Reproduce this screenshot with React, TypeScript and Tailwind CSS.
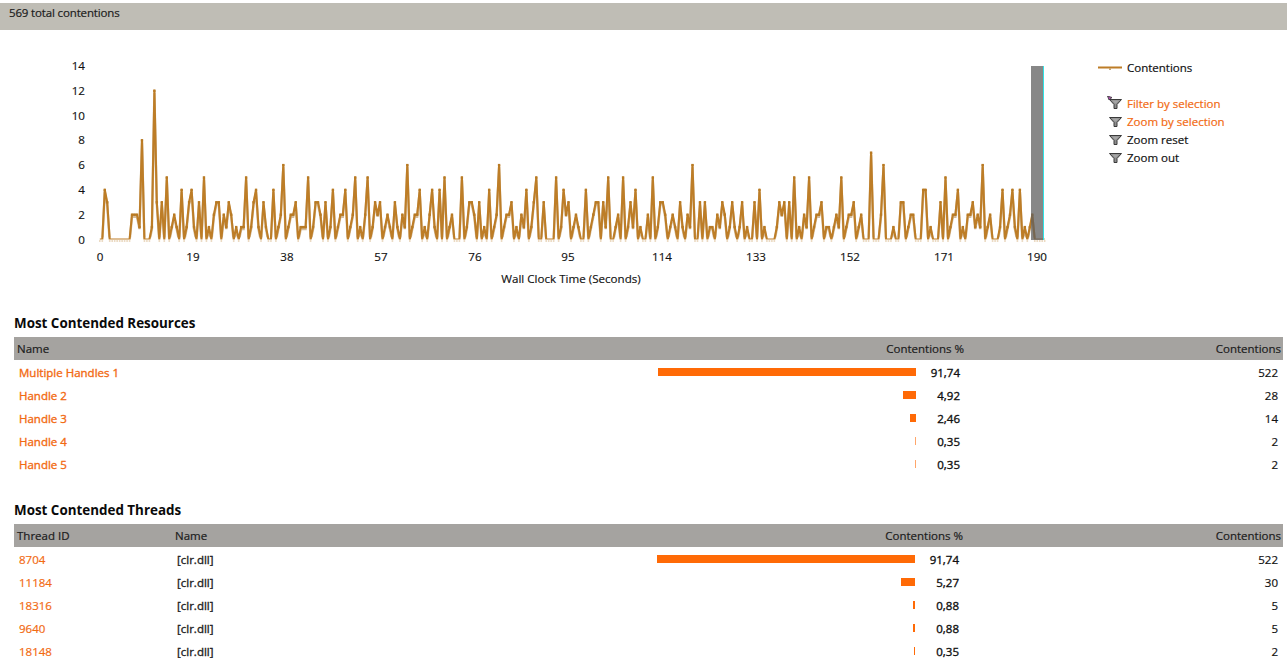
const VALUES = [
  0,0,4,3,0,0,0,0,0,0,0,0,0,2,2,2,1,8,0,0,0,1,12,3,0,3,0,5,0,1,2,1,0,4,0,1,3,4,1,0,3,0,5,0,1,0,2,3,3,0,2,1,3,2,0,1,0,1,1,5,0,1,3,4,1,0,3,1,0,0,4,0,1,2,6,0,1,2,2,3,0,1,1,1,5,0,1,3,3,2,0,3,0,1,4,0,1,2,2,4,0,1,2,5,0,1,0,2,5,0,1,3,2,3,0,1,2,1,0,3,1,0,2,1,6,
  0,1,2,2,4,0,1,0,2,4,1,0,4,0,5,0,1,2,0,0,0,5,0,1,3,3,2,0,3,0,1,0,4,0,1,2,6,0,1,2,2,3,0,1,0,2,1,4,0,1,3,5,0,0,3,0,0,0,0,5,0,1,4,2,3,0,1,2,1,0,0,4,0,1,2,3,3,0,3,1,5,0,0,1,2,0,5,0,1,3,1,4,0,1,0,0,2,0,5,0,1,3,3,2,0,1,2,1,0,3,1,0,2,1,6,0,0,3,0,3,0,1,1,0,2,1,3,2,0,1,3,1,0,1,3,0,1,
  0,0,3,0,4,0,1,0,0,0,0,1,3,2,3,0,3,0,5,0,1,0,2,1,5,0,1,2,2,3,0,1,1,0,1,2,1,5,0,1,2,2,3,0,1,2,0,0,0,7,0,0,0,2,6,0,0,0,1,0,0,3,3,0,1,2,2,0,0,0,4,4,0,1,0,0,0,3,0,5,0,1,2,2,4,0,1,0,2,2,3,1,2,1,6,0,1,2,0,0,0,1,4,0,1,2,4,1,0,4,0,1,0,1,2,0,0,0,0,0,
];
const X0 = 99.8;
const STEP = 2.48;
const Y0 = 209.5;
const UNIT = 12.4;
const pts = (dy: number) => VALUES.map((v, i) => `${(X0 + i * STEP).toFixed(1)},${(Y0 - v * UNIT + dy).toFixed(1)}`).join(" ");
const Y_TICKS = [0, 2, 4, 6, 8, 10, 12, 14];
const X_TICKS = [
  [0, 100], [19, 193], [38, 287], [57, 381], [76, 475], [95, 568], [114, 662], [133, 756], [152, 850], [171, 944], [190, 1037],
];
const FONT = "font-['Open_Sans','Noto_Sans',sans-serif]";
const INK = "[-webkit-text-stroke:0.2px_currentColor]";
const INK_STRONG = "[-webkit-text-stroke:0.35px_currentColor]";

function Funnel({ cursor }: { cursor?: boolean }) {
  return (
    <svg width="16" height="16" viewBox="0 0 16 16" className="shrink-0">
      <path d="M2.5 3.5 H14.5 L10 8.5 V12.5 H7 V8.5 Z" fill="#8d8d8d" stroke="#3a3a3a" strokeWidth="1" />
      <path d="M5 4.5 H12 L9 7.5 H8 Z" fill="#a6a6a6" />
      {cursor && <path d="M0.5 0 L5 1.5 L2 4 Z" fill="#b04fb0" stroke="#333333" strokeWidth="0.8" />}
    </svg>
  );
}

function Chart() {
  return (
    <svg width="1090" height="262" viewBox="0 0 1090 262" className="shrink-0">
      <defs>
        <clipPath id="shadow">
          <rect x="90" y="30" width="960" height={Y0 - 32} />
        </clipPath>
        <clipPath id="plot">
          <rect x="90" y="30" width="960" height={Y0 - 30} />
        </clipPath>
      </defs>
      <g clipPath="url(#shadow)">
        <polyline points={pts(2)} fill="none" stroke="#cdb08a" strokeWidth="2.4" strokeLinejoin="miter" opacity="0.85" />
      </g>
      <g clipPath="url(#plot)">
        <polyline points={pts(0)} fill="none" stroke="#bd7d27" strokeWidth="2.1" strokeLinejoin="round" />
      </g>
      {VALUES.map((v, i) =>
        v === 0 ? (
          <rect key={i} x={X0 + i * STEP - 0.8} y={Y0 + 1} width="1.6" height="1" fill="#b87a24" opacity="0.55" />
        ) : (
          <rect key={i} x={X0 + i * STEP - 1.2} y={Y0 - v * UNIT - 1.2} width="2.4" height="2.4" fill="#b87a24" />
        ),
      )}
      <rect x="1031" y="36" width="12.5" height="174" fill="#5f5f5f" opacity="0.75" />
      <rect x="1043" y="36" width="1" height="174" fill="#2fe3e6" />
      <g fontSize="11.6" fill="#111111" stroke="#111111" strokeWidth="0.15">
        {Y_TICKS.map((t) => (
          <text key={t} x="85" y={Y0 - t * UNIT + 4} textAnchor="end">{t}</text>
        ))}
        {X_TICKS.map(([label, x]) => (
          <text key={label} x={x} y="231" textAnchor="middle">{label}</text>
        ))}
        <text x="571" y="253" textAnchor="middle">Wall Clock Time (Seconds)</text>
      </g>
    </svg>
  );
}

function Legend() {
  const items = [
    { label: "Filter by selection", cls: "text-[#f26a12]", cursor: true },
    { label: "Zoom by selection", cls: "text-[#f26a12]" },
    { label: "Zoom reset", cls: "text-[#111111]" },
    { label: "Zoom out", cls: "text-[#111111]" },
  ];
  return (
    <div className="ml-[8px] flex flex-col pt-[29px]">
      <div className="flex h-[18px] items-center gap-[5px]">
        <svg width="24" height="4" viewBox="0 0 24 4" className="shrink-0">
          <rect x="0" y="0.5" width="24" height="2" fill="#bd7d27" />
          <rect x="11" y="2" width="2" height="2" fill="#c9a878" />
        </svg>
        <span className={`text-[#111111] ${INK}`}>Contentions</span>
      </div>
      <div className="mt-[18px] flex flex-col pl-[9px]">
        {items.map((it) => (
          <div key={it.label} className="flex h-[18px] items-center gap-[4px]">
            <Funnel cursor={it.cursor} />
            <span className={`${it.cls} ${INK}`}>{it.label}</span>
          </div>
        ))}
      </div>
    </div>
  );
}

function Bar({ w }: { w: string }) {
  return (
    <div className="flex h-full w-[258px] items-center justify-end">
      <span className={`h-[8px] bg-[#ff6a06] ${w}`} />
    </div>
  );
}

function Resources() {
  const rows = [
    ["Multiple Handles 1", "w-[258px]", "91,74", "522"],
    ["Handle 2", "w-[13px]", "4,92", "28"],
    ["Handle 3", "w-[6px]", "2,46", "14"],
    ["Handle 4", "w-[1px] opacity-60", "0,35", "2"],
    ["Handle 5", "w-[1px] opacity-60", "0,35", "2"],
  ];
  return (
    <section className="ml-[14px] w-[1269px]">
      <h2 className="flex h-[27px] items-center text-[13.4px] font-bold text-[#0a0a0a]">Most Contended Resources</h2>
      <div className={`flex h-[23px] items-center bg-[#a5a3a0] text-[#1c1c1c] ${INK}`}>
        <span className="flex-1 pl-[3px]">Name</span>
        <span className="w-[200px] pr-[2px] text-right">Contentions %</span>
        <span className="w-[317px] pr-[2px] text-right">Contentions</span>
      </div>
      {rows.map(([name, w, pct, n]) => (
        <div key={name} className="flex h-[23px] items-center">
          <span className={`w-[644px] pl-[5px] pt-[2px] text-[#f26a12] ${INK_STRONG}`}>{name}</span>
          <Bar w={w} />
          <span className={`w-[44px] pt-[2px] text-right text-[#111111] ${INK_STRONG}`}>{pct}</span>
          <span className={`flex-1 pr-[5px] pt-[2px] text-right text-[#111111] ${INK}`}>{n}</span>
        </div>
      ))}
    </section>
  );
}

function Threads() {
  const rows = [
    ["8704", "w-[258px]", "91,74", "522"],
    ["11184", "w-[14px]", "5,27", "30"],
    ["18316", "w-[2px]", "0,88", "5"],
    ["9640", "w-[2px]", "0,88", "5"],
    ["18148", "w-[1px]", "0,35", "2"],
  ];
  return (
    <section className="ml-[14px] mt-[22px] w-[1269px]">
      <h2 className="flex h-[27px] items-center text-[13.4px] font-bold text-[#0a0a0a]">Most Contended Threads</h2>
      <div className={`flex h-[23px] items-center bg-[#a5a3a0] text-[#1c1c1c] ${INK}`}>
        <span className="w-[158px] pl-[3px]">Thread ID</span>
        <span className="flex-1 pl-[3px]">Name</span>
        <span className="w-[200px] pr-[2px] text-right">Contentions %</span>
        <span className="w-[318px] pr-[2px] text-right">Contentions</span>
      </div>
      {rows.map(([id, w, pct, n]) => (
        <div key={id} className="flex h-[23px] items-center">
          <span className={`w-[159px] pl-[5px] pt-[2px] text-[#f26a12] ${INK}`}>{id}</span>
          <span className={`w-[484px] pl-[4px] pt-[2px] text-[#222222] ${INK_STRONG}`}>[clr.dll]</span>
          <Bar w={w} />
          <span className={`w-[44px] pt-[2px] text-right text-[#111111] ${INK_STRONG}`}>{pct}</span>
          <span className={`flex-1 pr-[5px] pt-[2px] text-right text-[#111111] ${INK}`}>{n}</span>
        </div>
      ))}
    </section>
  );
}

export default function App() {
  return (
    <div className={`flex h-[661px] w-[1287px] flex-col overflow-hidden bg-white pt-[3px] text-[11.5px] ${FONT}`}>
      <div className={`flex h-[27px] shrink-0 items-start bg-[#bfbdb5] pl-[9px] pt-[1px] tracking-[-0.15px] text-[#1c1c1c] ${INK}`}>569 total contentions</div>
      <div className="flex h-[280px] shrink-0">
        <Chart />
        <Legend />
      </div>
      <Resources />
      <Threads />
    </div>
  );
}
